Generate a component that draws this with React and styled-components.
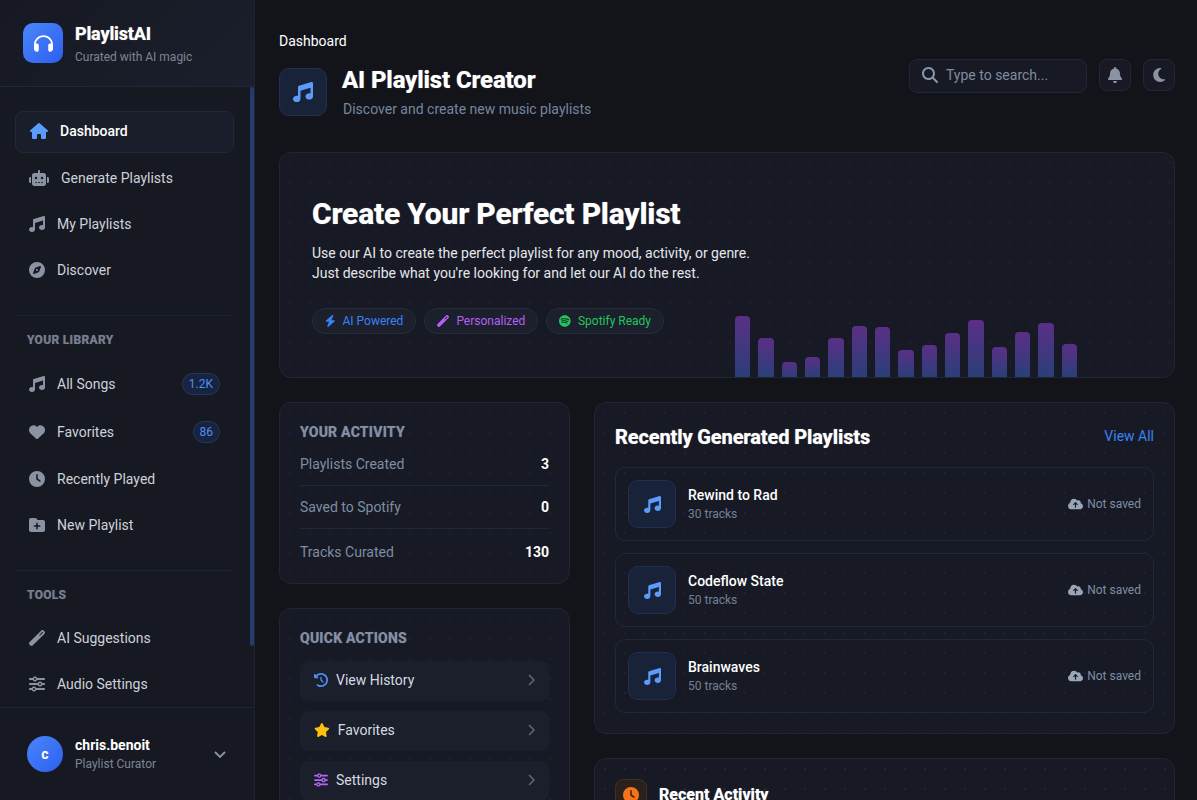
import React from "react";
import styled, { createGlobalStyle } from "styled-components";
import {
  FaHeadphones, FaHouse, FaRobot, FaMusic, FaCompass, FaHeart, FaClock, FaFolderPlus,
  FaWandMagic, FaSliders, FaMagnifyingGlass, FaBell, FaMoon,
  FaBolt, FaSpotify, FaClockRotateLeft, FaStar, FaCloudArrowUp,
} from "react-icons/fa6";

const GlobalStyle = createGlobalStyle`
  * { box-sizing: border-box; }
  html, body { margin: 0; height: 100%; background: #13141a; overflow: hidden; }
  body { font-family: Roboto, "Liberation Sans", sans-serif; color: #fff; }
`;

const Shell = styled.div`display: flex; height: 100vh; overflow: hidden; background: #13141a;`;

const Sidebar = styled.aside`
  position: relative; width: 255px; flex: none; display: flex; flex-direction: column;
  background: #161922; border-right: 1px solid #1f2330;
`;
const ScrollThumb = styled.div`
  position: absolute; right: 0; top: 87px; width: 4px; height: 559px; border-radius: 2px; background: #263a6c;
`;
const Brand = styled.div`
  height: 87px; flex: none; display: flex; align-items: center; gap: 12px; padding: 0 23px;
  background: linear-gradient(135deg, #161922, #1b1f2c); border-bottom: 1px solid #212738;
`;
const BrandLogo = styled.div`
  width: 40px; height: 40px; border-radius: 10px; display: flex; align-items: center; justify-content: center;
  background: linear-gradient(135deg, #4a86fb, #2d5ff0); color: #fff; font-size: 19px;
`;
const BrandText = styled.div`display: flex; flex-direction: column; gap: 5px;`;
const BrandName = styled.div`font-size: 18px; line-height: 22px; font-weight: 800; letter-spacing: -0.2px; color: #fff; text-shadow: 0 0 1px rgba(255,255,255,.45);`;
const BrandTag = styled.div`font-size: 12px; line-height: 14px; color: #7d8595;`;

const Nav = styled.nav`
  flex: 1; min-height: 0; overflow: hidden; padding: 24px 20px 0 15px;
`;
const NavItem = styled.a`
  display: flex; align-items: center; gap: 12px; margin-bottom: 4px;
  height: ${p => (p.$tall ? 44 : 42)}px;
  padding: 0 14px ${p => (p.$active ? 2 : 0)}px; border-radius: 8px; font-size: 14px;
  font-weight: ${p => (p.$active ? 500 : 400)};
  color: ${p => (p.$active ? "#fff" : "#cdd1d9")};
  background: ${p => (p.$active ? "#1a1e2a" : "transparent")};
  border: ${p => (p.$active ? "1px solid #232836" : "0")};
  & > svg { width: ${p => p.$iconWidth}px; height: 16px; flex: none; color: ${p => (p.$active ? "#5b9bfa" : "#8b93a3")}; }
`;
const NavLabel = styled.span`flex: 1;`;
const Badge = styled.span`
  height: 22px; padding: 0 6px; display: flex; align-items: center; border-radius: 11px;
  font-size: 12px; color: #4f8ef7; background: #18243f; border: 1px solid #233563;
`;
const NavDivider = styled.div`height: 1px; background: #1f2331; margin: 24px 0 17px;`;
const SectionLabel = styled.div`
  font-size: 12px; line-height: 14px; font-weight: 800; letter-spacing: 0.3px; color: #777f8e; padding-left: 12px;
  text-transform: uppercase; margin-bottom: 15px; text-shadow: 0 0 1px rgba(119,127,142,.45);
`;

const UserBar = styled.div`
  height: 93px; flex: none; display: flex; align-items: center; gap: 12px; padding: 0 28px 0 27px;
  border-top: 1px solid #212533;
`;
const Avatar = styled.div`
  width: 36px; height: 36px; border-radius: 50%; display: flex; align-items: center; justify-content: center;
  background: linear-gradient(135deg, #4a86fb, #2d5ff0); font-size: 14px; font-weight: 700; color: #fff;
`;
const UserText = styled.div`flex: 1; display: flex; flex-direction: column; gap: 2px;`;
const UserName = styled.div`font-size: 14px; line-height: 18px; font-weight: 700; color: #fff;`;
const UserRole = styled.div`font-size: 12px; line-height: 16px; color: #7d8595;`;
const UserCaret = styled.svg`width: 12px; height: 7px; flex: none; fill: none; stroke: #8b93a3; stroke-width: 1.8;`;

const Main = styled.main`flex: 1; min-width: 0; height: 100vh; overflow: hidden; padding: 32px 22px 40px 24px;`;
const Header = styled.header`display: flex; justify-content: space-between; align-items: flex-start; margin-bottom: 34px;`;
const Crumb = styled.div`font-size: 14px; line-height: 18px; color: #fff; margin-bottom: 16px;`;
const TitleRow = styled.div`display: flex; align-items: center; gap: 15px;`;
const TileIcon = styled.div`
  width: ${p => p.$size || 48}px; height: ${p => p.$size || 48}px; flex: none;
  border-radius: ${p => (p.$size ? 8 : 10)}px; display: flex; align-items: center; justify-content: center;
  font-size: ${p => p.$glyph}px;
  color: ${p => (p.$orange ? "#f97316" : "#5b9bfa")};
  background: ${p => (p.$orange ? "#2a211d" : "#18233a")};
  border: 1px solid ${p => (p.$orange ? "#42301f" : "#22304f")};
`;
const PageTitle = styled.h1`margin: 0 0 6px; font-size: 24px; line-height: 28px; font-weight: 800; letter-spacing: -0.15px; color: #fff; text-shadow: 0 0 1px rgba(255,255,255,.45);`;
const PageSub = styled.div`font-size: 14px; line-height: 18px; color: #7487a0; padding-left: 1px;`;
const Actions = styled.div`display: flex; align-items: flex-start; gap: 12px; margin-top: 27px;`;
const Search = styled.div`
  width: 178px; height: 34px; display: flex; align-items: center; gap: 8px; padding: 0 12px 2px;
  background: #171a24; border: 1px solid #212737; border-radius: 8px; font-size: 14px; color: #7f8ba0;
  & > svg { font-size: 16px; color: #8a96aa; }
`;
const IconButton = styled.button`
  width: 32px; height: 32px; padding: 0; display: flex; align-items: center; justify-content: center;
  background: #171a24; border: 1px solid #212737; border-radius: 8px; color: #8b93a3;
  & > svg { width: ${p => p.$iconWidth}px; height: 16px; }
`;

const dots = c => `radial-gradient(circle at 10px 10px, ${c} 1px, transparent 1.2px)`;
const Card = styled.section`
  background-color: #171a24;
  background-image: ${p => dots(p.$dot || "rgba(70,100,190,.11)")};
  background-size: 20px 20px;
  border: 1px solid #202536; border-radius: 12px;
`;
const Hero = styled(Card)`position: relative; padding: 44px 32px 43px; margin-bottom: 24px;`;
const HeroTitle = styled.h2`margin: 0 0 12px; font-size: 30px; line-height: 34px; font-weight: 800; letter-spacing: -0.22px; color: #fff; text-shadow: 0 0 1px rgba(255,255,255,.45);`;
const HeroText = styled.p`margin: 0 0 25px; font-size: 14px; line-height: 20px; color: #e5e7eb; max-width: 450px;`;
const Chips = styled.div`display: flex; gap: 8px;`;
const Chip = styled.span`
  height: 26px; display: flex; align-items: center; gap: 7px; padding: 0 12px; border-radius: 13px;
  background: #1c202c; border: 1px solid #282c3a; font-size: 12px; color: ${p => p.$color};
  & > svg { width: ${p => p.$iconWidth}px; height: 12px; }
`;
const Bars = styled.div`position: absolute; left: 455px; bottom: 0; width: 342px; height: 80px; display: flex; gap: 8px; align-items: flex-end;`;
const Bar = styled.div`flex: 1; border-radius: 4px 4px 0 0; background: linear-gradient(180deg, #5b2f87, #2a3f78);`;

const Columns = styled.div`display: grid; grid-template-columns: 291px 581px; gap: 24px; align-items: start;`;
const Stack = styled.div`display: flex; flex-direction: column; gap: 24px;`;
const Panel = styled(Card)`padding: 20px;`;
const PanelHeading = styled.h3`margin: 0 0 2px; font-size: 14px; line-height: 18px; font-weight: 800; letter-spacing: 0.22px; color: #8390a5; text-transform: uppercase; text-shadow: 0 0 1px rgba(131,144,165,.45);`;
const StatRow = styled.div`
  display: flex; justify-content: space-between; padding: 11px 0; line-height: 20px; font-size: 14px;
  border-bottom: 1px solid #232838;
  &:last-child { border-bottom: 0; padding: 13px 0 1px; }
`;
const StatLabel = styled.span`color: #7e8da3;`;
const StatValue = styled.span`font-weight: 700; color: #fff;`;
const QuickList = styled.div`display: flex; flex-direction: column; gap: 10px; margin-top: 14px;`;
const QuickButton = styled.a`
  height: 40px; display: flex; align-items: center; gap: 8px; padding: 0 14px 3px; border-radius: 8px;
  background: #1b1e2b; font-size: 14px; color: #d6dae1;
  & > svg:first-child { width: ${p => p.$iconWidth}px; height: 14px; color: ${p => p.$color}; flex: none; }
`;
const QuickLabel = styled.span`flex: 1;`;
const QuickArrow = styled.svg`width: 7px; height: 12px; flex: none; fill: none; stroke: #5f6980; stroke-width: 1.5;`;

const PanelHead = styled.div`display: flex; justify-content: space-between; align-items: center; height: 28px; margin-bottom: 16px;`;
const PanelTitle = styled.h2`margin: 0; font-size: 20px; line-height: 28px; font-weight: 800; letter-spacing: -0.15px; color: #fff; text-shadow: 0 0 1px rgba(255,255,255,.45);`;
const ViewAll = styled.a`font-size: 14px; color: #3b82f6; padding-bottom: 2px;`;
const PlaylistList = styled.div`display: flex; flex-direction: column; gap: 12px;`;
const PlaylistRow = styled.div`
  height: 74px; display: flex; align-items: center; gap: 12px; padding: 0 12px;
  border: 1px solid #232838; border-radius: 10px;
`;
const PlaylistText = styled.div`flex: 1; display: flex; flex-direction: column; gap: 2px;`;
const PlaylistName = styled.div`font-size: 14px; line-height: 18px; font-weight: 500; color: #fff;`;
const PlaylistMeta = styled.div`font-size: 12px; line-height: 16px; color: #768094;`;
const SaveState = styled.div`
  display: flex; align-items: center; gap: 4px; font-size: 12px; color: #7e8da3;
  & > svg { width: 15px; height: 12px; color: #9aa5b5; }
`;
const ActivityHead = styled.div`display: flex; align-items: center; gap: 12px; height: 32px;`;
const ActivityTitle = styled.h2`margin: 0; font-size: 16px; line-height: 28px; font-weight: 800; color: #fff; text-shadow: 0 0 1px rgba(255,255,255,.45);`;

const primary = [[FaHouse, "Dashboard", 18, true], [FaRobot, "Generate Playlists", 20], [FaMusic, "My Playlists", 16], [FaCompass, "Discover", 16]];
const library = [[FaMusic, "All Songs", 16, "1.2K"], [FaHeart, "Favorites", 16, "86"], [FaClock, "Recently Played", 16], [FaFolderPlus, "New Playlist", 16]];
const tools = [[FaWandMagic, "AI Suggestions", 16], [FaSliders, "Audio Settings", 16]];
const stats = [["Playlists Created", "3"], ["Saved to Spotify", "0"], ["Tracks Curated", "130"]];
const quick = [[FaClockRotateLeft, "View History", "#4f8ef7", 14], [FaStar, "Favorites", "#fbbf0d", 15.75], [FaSliders, "Settings", "#b266f5", 14]];
const playlists = [["Rewind to Rad", "30 tracks"], ["Codeflow State", "50 tracks"], ["Brainwaves", "50 tracks"]];
const barHeights = [61, 39, 15, 20, 39, 51, 50, 27, 32, 44, 57, 30, 45, 54, 33];

export default function App() {
  return (
    <Shell>
      <GlobalStyle />
      <Sidebar>
        <Brand>
          <BrandLogo><FaHeadphones /></BrandLogo>
          <BrandText>
            <BrandName>PlaylistAI</BrandName>
            <BrandTag>Curated with AI magic</BrandTag>
          </BrandText>
        </Brand>
        <Nav>
          {primary.map(([I, t, w, a]) => (
            <NavItem key={t} $active={a} $iconWidth={w}><I /><NavLabel>{t}</NavLabel></NavItem>
          ))}
          <NavDivider />
          <SectionLabel>Your Library</SectionLabel>
          {library.map(([I, t, w, b]) => (
            <NavItem key={t} $tall={!!b} $iconWidth={w}><I /><NavLabel>{t}</NavLabel>{b && <Badge>{b}</Badge>}</NavItem>
          ))}
          <NavDivider />
          <SectionLabel>Tools</SectionLabel>
          {tools.map(([I, t, w]) => (
            <NavItem key={t} $iconWidth={w}><I /><NavLabel>{t}</NavLabel></NavItem>
          ))}
        </Nav>
        <ScrollThumb />
        <UserBar>
          <Avatar>c</Avatar>
          <UserText>
            <UserName>chris.benoit</UserName>
            <UserRole>Playlist Curator</UserRole>
          </UserText>
          <UserCaret viewBox="0 0 12 7"><path d="M1 1l5 5 5-5" /></UserCaret>
        </UserBar>
      </Sidebar>
      <Main>
        <Header>
          <div>
            <Crumb>Dashboard</Crumb>
            <TitleRow>
              <TileIcon $glyph={20}><FaMusic /></TileIcon>
              <div>
                <PageTitle>AI Playlist Creator</PageTitle>
                <PageSub>Discover and create new music playlists</PageSub>
              </div>
            </TitleRow>
          </div>
          <Actions>
            <Search><FaMagnifyingGlass />Type to search...</Search>
            <IconButton $iconWidth={14}><FaBell /></IconButton>
            <IconButton $iconWidth={12.5}><FaMoon /></IconButton>
          </Actions>
        </Header>
        <Hero>
          <HeroTitle>Create Your Perfect Playlist</HeroTitle>
          <HeroText>Use our AI to create the perfect playlist for any mood, activity, or genre. Just describe what you're looking for and let our AI do the rest.</HeroText>
          <Chips>
            <Chip $color="#3b82f6" $iconWidth={10.5}><FaBolt />AI Powered</Chip>
            <Chip $color="#b55ff5" $iconWidth={12}><FaWandMagic />Personalized</Chip>
            <Chip $color="#22c55e" $iconWidth={11.6}><FaSpotify />Spotify Ready</Chip>
          </Chips>
          <Bars>
            {barHeights.map((h, i) => <Bar key={i} style={{ height: h }} />)}
          </Bars>
        </Hero>
        <Columns>
          <Stack>
            <Panel>
              <PanelHeading>Your Activity</PanelHeading>
              {stats.map(([l, v]) => (
                <StatRow key={l}><StatLabel>{l}</StatLabel><StatValue>{v}</StatValue></StatRow>
              ))}
            </Panel>
            <Panel>
              <PanelHeading>Quick Actions</PanelHeading>
              <QuickList>
                {quick.map(([I, t, c, w]) => (
                  <QuickButton key={t} $color={c} $iconWidth={w}>
                    <I /><QuickLabel>{t}</QuickLabel>
                    <QuickArrow viewBox="0 0 7 12"><path d="M1 1l5 5-5 5" /></QuickArrow>
                  </QuickButton>
                ))}
              </QuickList>
            </Panel>
          </Stack>
          <Stack>
            <Panel>
              <PanelHead>
                <PanelTitle>Recently Generated Playlists</PanelTitle>
                <ViewAll>View All</ViewAll>
              </PanelHead>
              <PlaylistList>
                {playlists.map(([n, m]) => (
                  <PlaylistRow key={n}>
                    <TileIcon $glyph={17}><FaMusic /></TileIcon>
                    <PlaylistText>
                      <PlaylistName>{n}</PlaylistName>
                      <PlaylistMeta>{m}</PlaylistMeta>
                    </PlaylistText>
                    <SaveState><FaCloudArrowUp />Not saved</SaveState>
                  </PlaylistRow>
                ))}
              </PlaylistList>
            </Panel>
            <Panel $dot="rgba(190,90,70,.13)">
              <ActivityHead>
                <TileIcon $size={32} $glyph={16} $orange><FaClock /></TileIcon>
                <ActivityTitle>Recent Activity</ActivityTitle>
              </ActivityHead>
            </Panel>
          </Stack>
        </Columns>
      </Main>
    </Shell>
  );
}
